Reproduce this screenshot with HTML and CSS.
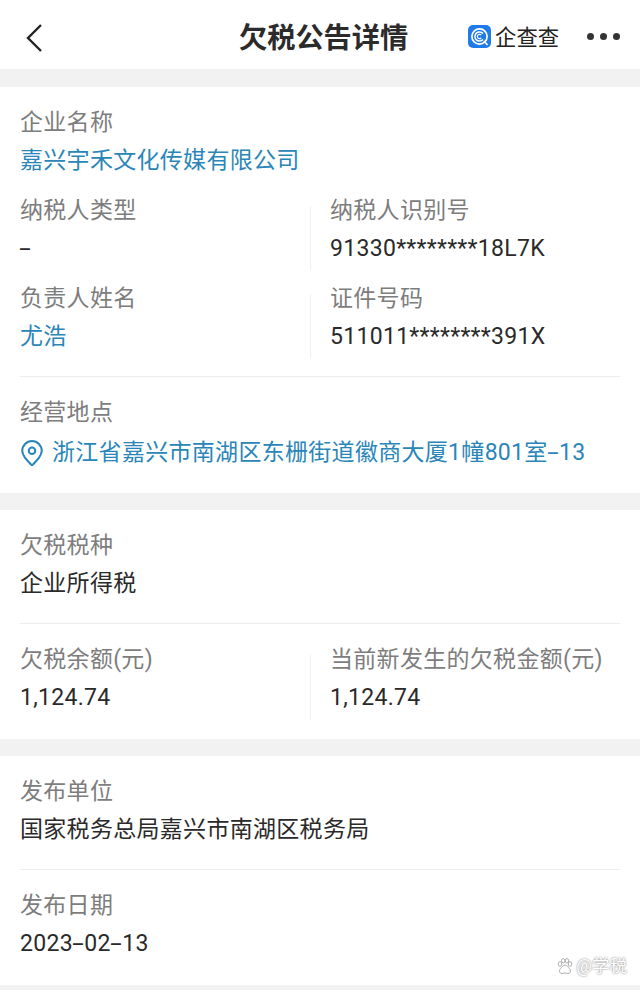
FILE: index.html
```html
<!DOCTYPE html>
<html lang="zh-CN">
  <head>
    <meta charset="UTF-8" />
    <title>欠税公告详情</title>
    <link rel="stylesheet" href="styles.css">
  </head>
  <body>
    <header class="topbar">
      <svg class="back" width="20" height="30" viewBox="0 0 20 30"><path d="M17 2 4 15l13 13" fill="none" stroke="#222" stroke-width="2.4"/></svg>
      <h1>欠税公告详情</h1>
      <div class="brand">
        <svg width="23" height="23" viewBox="0 0 23 23">
          <rect width="23" height="23" rx="5" fill="#1f7be8"/>
          <circle cx="11.5" cy="11.5" r="7.6" fill="none" stroke="#fff" stroke-width="1.7"/>
          <path d="M15 8.5a4.6 4.6 0 1 0 0 6" fill="none" stroke="#fff" stroke-width="1.5"/>
          <path d="M13.2 10a2.2 2.2 0 1 0 0 3" fill="none" stroke="#fff" stroke-width="1.2"/>
          <path d="m16 16 3.500 4" stroke="#fff" stroke-width="1.7"/>
        </svg>
        <span>企查查</span>
      </div>
      <div class="more"><i></i><i></i><i></i></div>
    </header>

    <section class="card first">
      <div class="field">
        <div class="label">企业名称</div>
        <div class="value link">嘉兴宇禾文化传媒有限公司</div>
      </div>
      <div class="cols">
        <div class="field">
          <div class="label">纳税人类型</div>
          <div class="value"><span class="dash">-</span></div>
        </div>
        <div class="field right">
          <div class="label">纳税人识别号</div>
          <div class="value">91330********18L7K</div>
        </div>
      </div>
      <div class="cols">
        <div class="field">
          <div class="label">负责人姓名</div>
          <div class="value link">尤浩</div>
        </div>
        <div class="field right">
          <div class="label">证件号码</div>
          <div class="value">511011********391X</div>
        </div>
      </div>
      <hr />
      <div class="field">
        <div class="label">经营地点</div>
        <div class="value link address">
          <svg width="22" height="26" viewBox="1 0 20 24"><path d="M11 23.500C6 18.500 2 14.500 2 10a9 9 0 0 1 18 0c0 4.500-4 8.500-9 13.500Z" fill="none" stroke="#2a86b8" stroke-width="1.900"/><circle cx="11" cy="10" r="3" fill="none" stroke="#2a86b8" stroke-width="1.900"/></svg>
          <span>浙江省嘉兴市南湖区东栅街道徽商大厦1幢801室<span class="dash">-</span>13</span>
        </div>
      </div>
    </section>

    <section class="card">
      <div class="field">
        <div class="label">欠税税种</div>
        <div class="value">企业所得税</div>
      </div>
      <hr />
      <div class="cols">
        <div class="field">
          <div class="label">欠税余额(元)</div>
          <div class="value">1,124.74</div>
        </div>
        <div class="field right">
          <div class="label">当前新发生的欠税金额(元)</div>
          <div class="value">1,124.74</div>
        </div>
      </div>
    </section>

    <section class="card">
      <div class="field">
        <div class="label">发布单位</div>
        <div class="value">国家税务总局嘉兴市南湖区税务局</div>
      </div>
      <hr />
      <div class="field">
        <div class="label">发布日期</div>
        <div class="value">2023<span class="dash">-</span>02<span class="dash">-</span>13</div>
      </div>
    </section>

    <div class="watermark">
      <svg width="16" height="17" viewBox="0 0 16 17" fill="#fff" stroke="#999" stroke-width=".8"><ellipse cx="3" cy="6" rx="1.800" ry="2.300"/><ellipse cx="6.200" cy="2.800" rx="1.700" ry="2.200"/><ellipse cx="10" cy="2.800" rx="1.700" ry="2.200"/><ellipse cx="13" cy="6" rx="1.800" ry="2.300"/><path d="M8 7c-2 0-3 2-4.500 3.500C2 12 2 15.500 5 15.500c1.200 0 2-.5 3-.5s1.800.5 3 .5c3 0 3-3.500 1.500-5C11 9 10 7 8 7Z"/></svg>
      <span>@学税</span>
    </div>
  </body>
</html>
```

FILE: styles.css
```css
*{box-sizing:border-box;margin:0;padding:0}
html,body{height:990px;overflow:hidden}
body{position:relative;background:#f2f2f2;font-family:Roboto,"Noto Sans CJK SC",sans-serif;color:#222}
.topbar{display:flex;align-items:center;height:69px;background:#fff;padding:4px 20px 0 24px;position:relative}
.back{margin-top:3px}
.topbar h1{position:absolute;left:239px;top:17px;font-size:28.2px;line-height:44px;font-weight:700;color:#2b2b2b}
.brand{display:flex;align-items:center;gap:4px;margin-left:auto;margin-right:28px;font-size:21.3px;line-height:30px;color:#222}
.brand span{margin-top:2px}
.more{display:flex;gap:6px}
.more i{width:7px;height:7px;border-radius:50%;background:#333}
.card{background:#fff;margin-top:17px;padding:17px 20px 0;height:229px}
.card.first{margin-top:18px;height:406px}
.field{min-width:0}
.label{font-size:23px;letter-spacing:.3px;line-height:38px;color:#7d7d7d}
.value{font-size:23px;letter-spacing:.3px;line-height:37px;color:#2a2a2a}
.link{color:#2a86b8}
.cols{display:grid;grid-template-columns:290px 1fr;margin-top:13px}
.right{position:relative;padding-left:20px}
.right::before{content:"";position:absolute;left:0;top:14px;bottom:-4px;border-left:1px solid #f0f0f0}
.card hr{border:0;border-top:1px solid #eceded;margin:21px 0 17px}
.address{display:flex;align-items:center;gap:9px;margin-top:2px;margin-left:1px}
.dash{display:inline-block;transform:scaleX(1.8);margin:0 2.4px}
.watermark{position:absolute;right:13px;top:955px;display:flex;align-items:center;gap:3px;font-size:17.5px;line-height:22px;color:#fff;text-shadow:0 0 2px #666}
```
